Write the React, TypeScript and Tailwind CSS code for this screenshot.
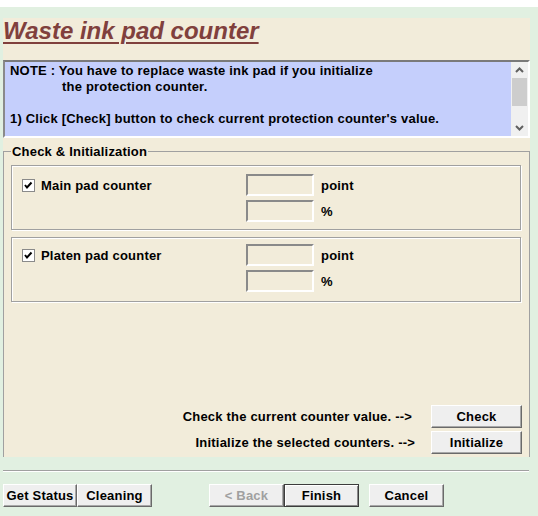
import React from 'react';

const font = "font-['Liberation_Sans',Arial,sans-serif]";

function Chevron({ down = false }: { down?: boolean }) {
  return (
    <svg width="9" height="6" viewBox="0 0 9 6" className={down ? 'rotate-180' : ''}>
      <polyline points="1,5 4.5,1.5 8,5" fill="none" stroke="#606060" strokeWidth="2" />
    </svg>
  );
}

function CheckBox() {
  return (
    <div className="w-[13px] h-[13px] bg-white border border-[#8a8a8a] flex items-center justify-center">
      <svg width="11" height="11" viewBox="0 0 11 11">
        <polyline points="2,5 4,7.5 8.5,2.5" fill="none" stroke="#000" strokeWidth="2" />
      </svg>
    </div>
  );
}

function Field({ unit }: { unit: string }) {
  return (
    <div className="flex items-center h-[22px]">
      <div className="w-[68px] h-[22px] border-2 border-t-[#8a8a8a] border-l-[#8a8a8a] border-r-white border-b-white bg-[#f2ecda]" />
      <span className="ml-[7px]">{unit}</span>
    </div>
  );
}

function CounterBox({ label, top }: { label: string; top: string }) {
  return (
    <div className={`h-[65px] border border-[#a0a0a0] shadow-[1px_1px_0_#fff,inset_1px_1px_0_#fff] pl-[10px] flex ${top}`}>
      <div className="w-[224px] h-[22px] flex items-center">
        <CheckBox />
        <span className="ml-[6px]">{label}</span>
      </div>
      <div className="flex flex-col gap-[4px]">
        <Field unit="point" />
        <Field unit="%" />
      </div>
    </div>
  );
}

function WinButton({
  children,
  className = '',
  disabled = false,
  isDefault = false,
}: {
  children: React.ReactNode;
  className?: string;
  disabled?: boolean;
  isDefault?: boolean;
}) {
  const edge = isDefault
    ? 'border border-[#3c3c3c] shadow-[inset_1px_1px_0_#fff,inset_-1px_-1px_0_#8a8a8a]'
    : 'border border-t-white border-l-white border-r-[#6a6a6a] border-b-[#6a6a6a] shadow-[inset_-1px_-1px_0_#a8a8a8]';
  return (
    <button
      className={`h-[23px] bg-[#efefef] text-[13px] leading-[15px] tracking-[0.2px] font-bold flex items-center justify-center ${edge} ${
        disabled ? 'text-[#a0a0a0]' : 'text-black'
      } ${className}`}
    >
      {children}
    </button>
  );
}

export default function App() {
  return (
    <div
      className={`w-[538px] h-[516px] bg-[#e1f0e1] flex flex-col text-black font-bold text-[13px] leading-[15px] tracking-[0.2px] ${font}`}
    >
      <div className="h-[7px] bg-white" />

      <div className="mt-[11px] ml-[3px] w-[527px] h-[439px] bg-[#f2ecda] flex flex-col">
        <h1 className="text-[24px] leading-[26px] tracking-normal italic font-bold text-[#80403d] underline decoration-[2px] underline-offset-[3px]">
          Waste ink pad counter
        </h1>

        {/* note area with its scrollbar */}
        <div className="mt-[16px] h-[78px] bg-[#c5cffc] border-2 border-t-[#7a7a7a] border-l-[#8a8a8a] border-r-white border-b-white flex">
          <div className="flex-1 pl-[5px] pt-[1px] leading-[16px]">
            <div>NOTE : You have to replace waste ink pad if you initialize</div>
            <div className="pl-[52px]">the protection counter.</div>
            <div className="h-[16px]" />
            <div>1) Click [Check] button to check current protection counter's value.</div>
          </div>
          <div className="w-[17px] bg-[#f0f0f0] flex flex-col">
            <div className="h-[16px] flex items-center justify-center">
              <Chevron />
            </div>
            <div className="h-[28px] mx-[1px] bg-[#cdcdcd]" />
            <div className="flex-1" />
            <div className="h-[16px] flex items-center justify-center">
              <Chevron down />
            </div>
          </div>
        </div>

        <fieldset className="mt-[6px] flex-1 border border-b-0 border-[#a0a0a0] pl-[7px] pr-[8px]">
          <legend className="px-[1px]">Check &amp; Initialization</legend>
          <div className="h-[298px] pt-[6px] pb-[3px] flex flex-col">
            <CounterBox label="Main pad counter" top="pt-[8px]" />
            <div className="mt-[7px]">
              <CounterBox label="Platen pad counter" top="pt-[6px]" />
            </div>

            <div className="mt-auto -mr-[1px] flex flex-col gap-[3px]">
              <div className="flex items-center justify-end">
                <span className="mr-[19px]">Check the current counter value. --&gt;</span>
                <WinButton className="w-[91px]">Check</WinButton>
              </div>
              <div className="flex items-center justify-end">
                <span className="mr-[16px]">Initialize the selected counters. --&gt;</span>
                <WinButton className="w-[91px]">Initialize</WinButton>
              </div>
            </div>
          </div>
        </fieldset>
      </div>

      <div className="mt-[13px] ml-[3px] w-[526px] border-t border-[#a0a0a0] shadow-[0_1px_0_#fff]" />

      <div className="mt-[13px] pl-[3px] flex">
        <WinButton className="w-[74px]">Get Status</WinButton>
        <WinButton className="w-[75px]">Cleaning</WinButton>
        <WinButton className="ml-[57px] w-[75px]" disabled>
          &lt; Back
        </WinButton>
        <WinButton className="w-[75px]" isDefault>
          Finish
        </WinButton>
        <WinButton className="ml-[10px] w-[75px]">Cancel</WinButton>
      </div>
    </div>
  );
}
